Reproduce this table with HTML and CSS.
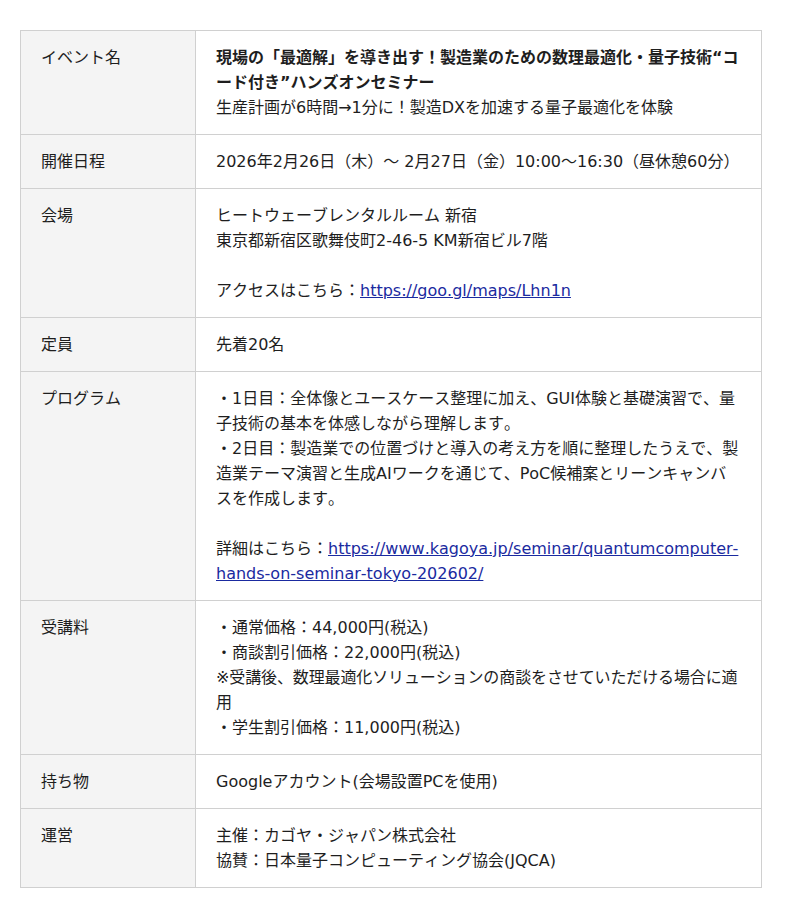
FILE: index.html
```html
<!DOCTYPE html>
<html lang="ja">
<head>
<meta charset="utf-8">
<link rel="stylesheet" href="styles.css">
</head>
<body>
<table class="info">
  <tr>
    <th>イベント名</th>
    <td><strong>現場の「最適解」を導き出す！製造業のための数理最適化・量子技術“コード付き”ハンズオンセミナー</strong><br>生産計画が6時間→1分に！製造DXを加速する量子最適化を体験</td>
  </tr>
  <tr>
    <th>開催日程</th>
    <td>2026年2月26日（木）〜 2月27日（金）10:00〜16:30（昼休憩60分）</td>
  </tr>
  <tr>
    <th>会場</th>
    <td>ヒートウェーブレンタルルーム 新宿<br>東京都新宿区歌舞伎町2-46-5 KM新宿ビル7階<br><br>アクセスはこちら：<a href="#">https://goo.gl/maps/Lhn1n</a></td>
  </tr>
  <tr>
    <th>定員</th>
    <td>先着20名</td>
  </tr>
  <tr>
    <th>プログラム</th>
    <td>・1日目：全体像とユースケース整理に加え、GUI体験と基礎演習で、量子技術の基本を体感しながら理解します。<br>・2日目：製造業での位置づけと導入の考え方を順に整理したうえで、製造業テーマ演習と生成AIワークを通じて、PoC候補案とリーンキャンバスを作成します。<br><br>詳細はこちら：<a href="#">https://www.kagoya.jp/seminar/quantumcomputer-hands-on-seminar-tokyo-202602/</a></td>
  </tr>
  <tr>
    <th>受講料</th>
    <td>・通常価格：44,000円(税込)<br>・商談割引価格：22,000円(税込)<br><span class="note">※受講後、数理最適化ソリューションの商談をさせていただける場合に適用</span><br>・学生割引価格：11,000円(税込)</td>
  </tr>
  <tr>
    <th>持ち物</th>
    <td>Googleアカウント(会場設置PCを使用)</td>
  </tr>
  <tr>
    <th>運営</th>
    <td>主催：カゴヤ・ジャパン株式会社<br>協賛：日本量子コンピューティング協会(JQCA)</td>
  </tr>
</table>
</body>
</html>
```
FILE: styles.css
```css
html, body {
  margin: 0;
  padding: 0;
  background: #fff;
}
body {
  padding: 30px 20px;
  font-family: "DejaVu Sans", "Noto Sans CJK JP", sans-serif;
  font-size: 16px;
  line-height: 25px;
  color: #1e1e1e;
  font-kerning: none;
}
.info {
  border-collapse: collapse;
  width: 742px;
  table-layout: fixed;
}
.info th,
.info td {
  border: 1px solid #d0d0d0;
  padding: 14px 20px;
  vertical-align: top;
  text-align: left;
  font-weight: normal;
}
.info th {
  width: 134px;
  background: #f4f4f4;
}
.info td {
  word-break: break-all;
}
.info strong {
  font-weight: bold;
}
.info a {
  color: #1a2aa0;
  text-decoration: underline;
}
.note {
  letter-spacing: -0.12px;
}
```
